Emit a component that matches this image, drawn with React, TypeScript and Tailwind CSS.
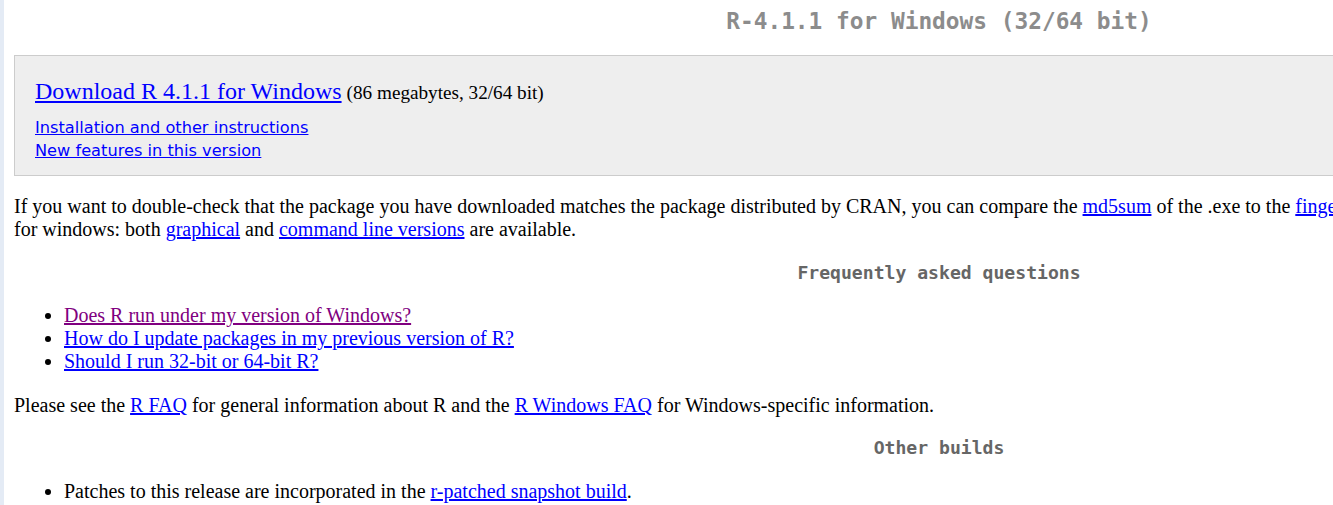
import React from "react";

const serif = { fontFamily: '"Liberation Serif", "Times New Roman", serif' };

export default function App() {
  const link = "text-[#0000ff] underline";
  const visited = "text-[#800080] underline";
  const mono = "font-['DejaVu_Sans_Mono',monospace] font-bold text-center";
  return (
    <div className="flex w-[1333px] h-[505px] overflow-hidden bg-white">
      <div className="w-[4px] shrink-0 bg-[#e4ebf5]" />
      <div
        className="w-[1870px] shrink-0 px-[10px] text-black text-[20px] leading-[23px] font-['Liberation_Serif',serif]"
        style={serif}
      >
        <h1 className={`${mono} text-[22.8px] leading-[27px] text-[#8c8c8c] pt-[8px]`}>
          R-4.1.1 for Windows (32/64 bit)
        </h1>

        <div className="mt-[20px] border border-[#cccccc] bg-[#eeeeee] pl-[20px] pt-[21px] pb-[13px]">
          <div className="leading-[28px]">
            <a className={`${link} text-[24px]`}>Download R 4.1.1 for Windows</a>{" "}
            <span className="text-[19.2px]">(86 megabytes, 32/64 bit)</span>
          </div>
          <div className="mt-[9px] font-['DejaVu_Sans',sans-serif] text-[16.2px] leading-[23px]">
            <div>
              <a className={link}>Installation and other instructions</a>
            </div>
            <div>
              <a className={link}>New features in this version</a>
            </div>
          </div>
        </div>

        <p className="mt-[19px]">
          If you want to double-check that the package you have downloaded matches the package
          distributed by CRAN, you can compare the <a className={link}>md5sum</a> of the .exe to the{" "}
          <a className={link}>fingerprint</a> on the master server. You will need a version of md5sum
          <br />
          for windows: both <a className={link}>graphical</a> and{" "}
          <a className={link}>command line versions</a> are available.
        </p>

        <h2 className={`${mono} text-[18.1px] leading-[22px] text-[#666666] mt-[21px]`}>
          Frequently asked questions
        </h2>

        <ul className="list-disc pl-[50px] mt-[20px]">
          <li>
            <a className={visited}>Does R run under my version of Windows?</a>
          </li>
          <li>
            <a className={link}>How do I update packages in my previous version of R?</a>
          </li>
          <li>
            <a className={link}>Should I run 32-bit or 64-bit R?</a>
          </li>
        </ul>

        <p className="mt-[21px]">
          Please see the <a className={link}>R FAQ</a> for general information about R and the{" "}
          <a className={link}>R Windows FAQ</a> for Windows-specific information.
        </p>

        <h2 className={`${mono} text-[18.1px] leading-[22px] text-[#666666] mt-[20px]`}>
          Other builds
        </h2>

        <ul className="list-disc pl-[50px] mt-[21px]">
          <li>
            Patches to this release are incorporated in the{" "}
            <a className={link}>r-patched snapshot build</a>.
          </li>
        </ul>
      </div>
    </div>
  );
}
